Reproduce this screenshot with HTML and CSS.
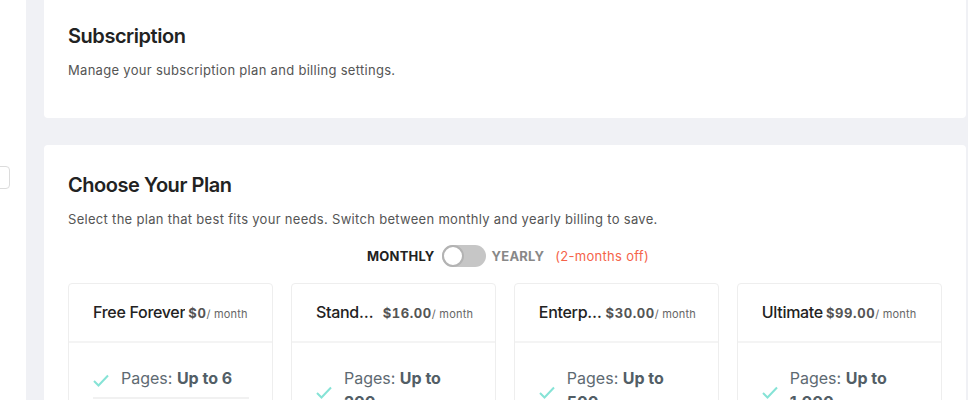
FILE: index.html
```html
<!DOCTYPE html>
<html lang="en">
<head>
  <meta charset="UTF-8" />
  <title>Subscription</title>
  <meta name="viewport" content="width=device-width, initial-scale=1" />
  <link rel="stylesheet" href="styles.css">
</head>
<body>

  <div class="layout">

    <!-- Sidebar (mostly collapsed) -->
    <aside class="sidebar">
      <div class="sidebar-input"></div>
    </aside>

    <main class="content">

      <!-- Subscription header -->
      <section class="panel panel-top">
        <h1 class="panel-title">Subscription</h1>
        <p class="panel-desc">Manage your subscription plan and billing settings.</p>
      </section>

      <!-- Plans -->
      <section class="panel">
        <h2 class="panel-title">Choose Your Plan</h2>
        <p class="panel-desc">Select the plan that best fits your needs. Switch between monthly and yearly billing to save.</p>

        <div class="billing-toggle">
          <span class="billing-label active">MONTHLY</span>
          <span class="switch"><span class="switch-knob"></span></span>
          <span class="billing-label">YEARLY</span>
          <span class="billing-note">(2-months off)</span>
        </div>

        <div class="plans">

          <div class="plan">
            <div class="plan-head">
              <span class="plan-name">Free Forever</span>
              <span class="plan-price"><b>$0</b><small>/ month</small></span>
            </div>
            <ul class="plan-features">
              <li>
                <svg class="check" viewBox="0 0 16 13" width="16" height="13"><polyline points="1,7 5.5,11.5 15,1.5" /></svg>
                <span>Pages: <b>Up to 6</b></span>
              </li>
            </ul>
          </div>

          <div class="plan">
            <div class="plan-head">
              <span class="plan-name">Standard</span>
              <span class="plan-price"><b>$16.00</b><small>/ month</small></span>
            </div>
            <ul class="plan-features">
              <li>
                <svg class="check" viewBox="0 0 16 13" width="16" height="13"><polyline points="1,7 5.5,11.5 15,1.5" /></svg>
                <span>Pages: <b>Up to 200</b></span>
              </li>
            </ul>
          </div>

          <div class="plan">
            <div class="plan-head">
              <span class="plan-name">Enterprise</span>
              <span class="plan-price"><b>$30.00</b><small>/ month</small></span>
            </div>
            <ul class="plan-features">
              <li>
                <svg class="check" viewBox="0 0 16 13" width="16" height="13"><polyline points="1,7 5.5,11.5 15,1.5" /></svg>
                <span>Pages: <b>Up to 500</b></span>
              </li>
            </ul>
          </div>

          <div class="plan">
            <div class="plan-head">
              <span class="plan-name">Ultimate</span>
              <span class="plan-price"><b>$99.00</b><small>/ month</small></span>
            </div>
            <ul class="plan-features">
              <li>
                <svg class="check" viewBox="0 0 16 13" width="16" height="13"><polyline points="1,7 5.5,11.5 15,1.5" /></svg>
                <span>Pages: <b>Up to 1,000</b></span>
              </li>
            </ul>
          </div>

        </div>
      </section>

    </main>
  </div>

</body>
</html>
```

FILE: styles.css
```css
* { box-sizing: border-box; }
html, body { margin: 0; height: 100%; overflow: hidden; }
body {
  font-family: Inter, "Liberation Sans", Arial, sans-serif;
  background: #f0f1f5;
  color: #222;
}

.layout {
  display: flex;
  height: 100%;
}

/* sidebar */
.sidebar {
  width: 26px;
  flex-shrink: 0;
  background: #fff;
  padding-top: 166px;
  overflow: hidden;
}

.sidebar-input {
  width: 30px;
  height: 23px;
  margin-left: -20px;
  border: 1px solid #dcdcdc;
  border-radius: 4px;
}

/* main */
.content {
  flex: 1;
  padding: 0 2px 0 18px;
  margin-top: -4px;
}

.panel {
  background: #fff;
  border-radius: 4px;
  padding: 26px 24px 24px;
}

.panel-top {
  padding-bottom: 38px;
  margin-bottom: 27px;
}

.panel-title {
  margin: 0;
  font-size: 20px;
  line-height: 28px;
  font-weight: 600;
  letter-spacing: -0.45px;
  color: #222;
}

.panel-desc {
  margin: 10px 0 0;
  font-size: 13px;
  line-height: 20px;
  letter-spacing: 0.3px;
  color: #555;
}

/* billing toggle */
.billing-toggle {
  display: flex;
  justify-content: center;
  align-items: center;
  height: 22px;
  margin: 16px 0 16px;
  padding-left: 6px;
  font-size: 13px;
}

.billing-label {
  font-weight: 700;
  color: #888;
  letter-spacing: 0.2px;
}

.billing-label.active { color: #222; }

.switch {
  position: relative;
  width: 44px;
  height: 22px;
  margin: 0 6px 0 7px;
  border-radius: 11px;
  background: #c6c6c6;
}

.switch-knob {
  position: absolute;
  top: 0;
  left: 0;
  width: 22px;
  height: 22px;
  border-radius: 50%;
  background: #fff;
  border: 2px solid #b3b3b3;
}

.billing-note {
  margin-left: 11px;
  letter-spacing: 0.3px;
  color: #f5634a;
}

/* plans */
.plans {
  display: grid;
  grid-template-columns: repeat(4, 1fr);
  gap: 17.7px;
}

.plan {
  border: 1px solid #eee;
  border-radius: 4px;
  min-width: 0;
}

.plan-head {
  display: flex;
  align-items: center;
  padding: 16px 22px 17px 24px;
  border-bottom: 2px solid #f4f4f4;
  white-space: nowrap;
}

.plan-name {
  min-width: 0;
  overflow: hidden;
  text-overflow: ellipsis;
  font-size: 16px;
  line-height: 24px;
  font-weight: 500;
  letter-spacing: -0.3px;
  color: #222;
}

.plan-price {
  flex-shrink: 0;
  margin-left: 3px;
  color: #555;
}

.plan-price b {
  font-size: 13px;
  font-weight: 700;
  font-variant-numeric: tabular-nums;
  letter-spacing: 0.6px;
}

.plan-price small {
  font-size: 11px;
  letter-spacing: 0.2px;
  color: #666;
}

.plan-features {
  list-style: none;
  margin: 0;
  padding: 15px 23px 15px 24px;
}

.plan-features li {
  display: flex;
  align-items: center;
  padding: 8px 0 7px;
  border-bottom: 2px solid #f1f1f1;
  font-size: 16px;
  line-height: 24px;
  color: #5e6a72;
}

.plan-features li b {
  font-weight: 700;
  color: #525e66;
}

.check {
  flex-shrink: 0;
  margin: 5px 12px 0 0;
  fill: none;
  stroke: #86e3d6;
  stroke-width: 2;
}
```
